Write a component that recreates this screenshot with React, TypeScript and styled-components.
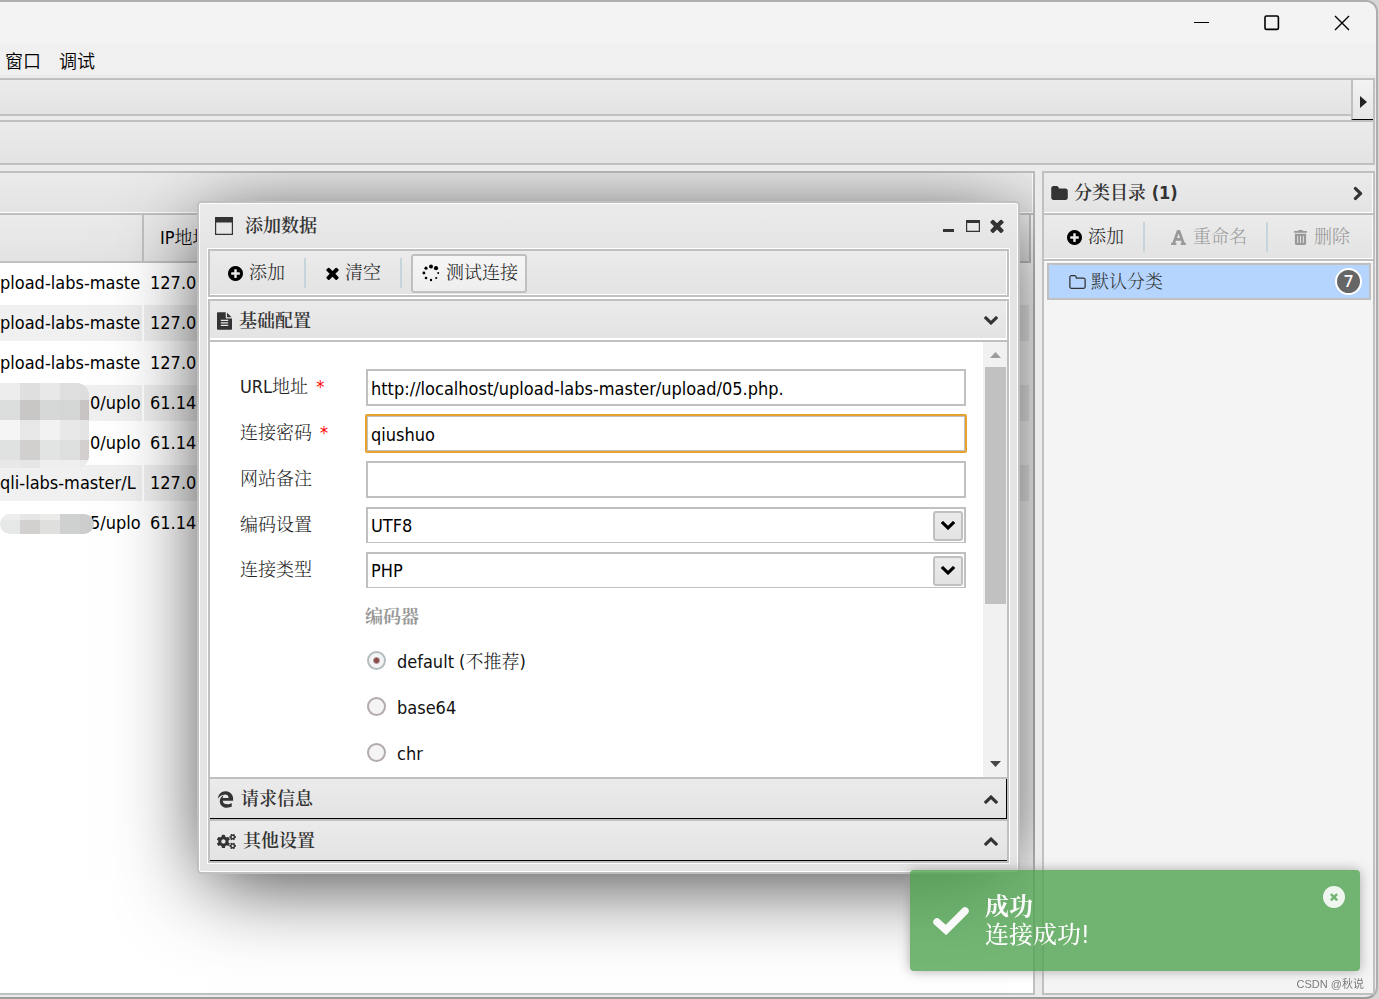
import React, { useState } from 'react';
import styled, { createGlobalStyle, css } from 'styled-components';
import { FaCogs, FaFont, FaTrashAlt } from 'react-icons/fa';
import { FaEdgeLegacy } from 'react-icons/fa6';

const line = '#c0c0c0';
const bar = 'linear-gradient(#ebebeb, #e3e3e3)';
const uiFont = '"DejaVu Sans Condensed", Tahoma, "Noto Serif CJK SC", "Noto Sans CJK SC", sans-serif';

const GlobalStyle = createGlobalStyle`
  * { box-sizing: border-box; }
  body { margin: 0; background: #d6d6d6; font: 300 18px/24px ${uiFont}; color: #000; }
  button, input, select { font: inherit; color: inherit; margin: 0; }
  button { cursor: pointer; }
  h2, h3 { margin: 0; font: inherit; }
`;

/* ---------- icons ---------- */

const paths = {
  chevron:
    'M1683 808l-742 741q-19 19-45 19t-45-19l-742-741q-19-19-19-45.5t19-45.5l166-165q19-19 45-19t45 19l531 531 531-531q19-19 45-19t45 19l166 165q19 19 19 45.5t-19 45.5z',
  times:
    'M1490 1322q0 40-28 68l-136 136q-28 28-68 28t-68-28l-294-294-294 294q-28 28-68 28t-68-28l-136-136q-28-28-28-68t28-68l294-294-294-294q-28-28-28-68t28-68l136-136q28-28 68-28t68 28l294 294 294-294q28-28 68-28t68 28l136 136q28 28 28 68t-28 68l-294 294 294 294q28 28 28 68z',
  plus:
    'M1344 960v-128q0-26-19-45t-45-19h-256v-256q0-26-19-45t-45-19h-128q-26 0-45 19t-19 45v256h-256q-26 0-45 19t-19 45v128q0 26 19 45t45 19h256v256q0 26 19 45t45 19h128q26 0 45-19t19-45v-256h256q26 0 45-19t19-45zm320-64q0 209-103 385.5t-279.5 279.5-385.5 103-385.5-103-279.5-279.5-103-385.5 103-385.5 279.5-279.5 385.5-103 385.5 103 279.5 279.5 103 385.5z',
  folder:
    'M1728 608v704q0 92-66 158t-158 66h-1216q-92 0-158-66t-66-158v-960q0-92 66-158t158-66h320q92 0 158 66t66 158v32h672q92 0 158 66t66 158z',
  folderOpen:
    'M1600 1312v-704q0-40-28-68t-68-28h-704q-40 0-68-28t-28-68v-64q0-40-28-68t-68-28h-320q-40 0-68 28t-28 68v960q0 40 28 68t68 28h1216q40 0 68-28t28-68zm128-704v704q0 92-66 158t-158 66h-1216q-92 0-158-66t-66-158v-960q0-92 66-158t158-66h320q92 0 158 66t66 158v32h672q92 0 158 66t66 158z',
  file:
    'M1596 476q14 14 28 36h-472v-472q22 14 36 28zm-476 164h544v1056q0 40-28 68t-68 28h-1344q-40 0-68-28t-28-68v-1600q0-40 28-68t68-28h800v544q0 40 28 68t68 28zm160 736v-64q0-14-9-23t-23-9h-704q-14 0-23 9t-9 23v64q0 14 9 23t23 9h704q14 0 23-9t9-23zm0-256v-64q0-14-9-23t-23-9h-704q-14 0-23 9t-9 23v64q0 14 9 23t23 9h704q14 0 23-9t9-23zm0-256v-64q0-14-9-23t-23-9h-704q-14 0-23 9t-9 23v64q0 14 9 23t23 9h704q14 0 23-9t9-23z',
};

const Svg = styled.svg<{ $turn?: number }>`
  display: block;
  flex: none;
  fill: currentColor;
  ${(p) => p.$turn && css`transform: rotate(${p.$turn}deg);`}
`;

type IconProps = { name: keyof typeof paths; box: string; w: number; h: number; turn?: number };
const Icon = ({ name, box, w, h, turn }: IconProps) => (
  <Svg viewBox={box} width={w} height={h} $turn={turn} aria-hidden="true">
    <path d={paths[name]} />
  </Svg>
);

const PlusIcon = () => <Icon name="plus" box="128 128 1536 1536" w={15} h={15} />;
const TimesIcon = ({ size = 13 }: { size?: number }) => (
  <Icon name="times" box="302 302 1188 1252" w={size} h={size} />
);
const Chevron = ({ turn = 0 }: { turn?: number }) => (
  <Icon name="chevron" box="90 533 1612 1035" w={14} h={9} turn={turn} />
);

const SpinnerIcon = () => (
  <Svg viewBox="0 0 18 18" width="18" height="18" aria-hidden="true">
    <circle cx="9" cy="2.4" r="2" />
    <circle cx="14" cy="4.2" r="2.1" />
    <circle cx="16.2" cy="9" r="1" />
    <circle cx="14.2" cy="14" r="1.1" />
    <circle cx="9" cy="16" r="1.2" />
    <circle cx="4" cy="14" r="1.3" />
    <circle cx="1.9" cy="9" r="1.4" />
    <circle cx="4" cy="4.2" r="1.6" />
  </Svg>
);

const WindowIcon = () => (
  <Svg viewBox="0 0 18 18" width="18" height="18" aria-hidden="true">
    <path d="M0 0h18v18H0zM1.2 5.6v11.2h15.6v-11.2z" fillRule="evenodd" />
  </Svg>
);

/* ---------- application window ---------- */

const AppWindow = styled.div`
  display: flex;
  flex-direction: column;
  min-height: 100vh;
  margin-right: 1px;
  background: #ebebeb;
  border: 2px solid #aeaeae;
  border-left: 0;
  border-bottom-color: #9c9c9c;
  border-radius: 0 12px 12px 0;
  overflow: hidden;
`;

const TitleBar = styled.header`
  display: flex;
  justify-content: flex-end;
  height: 43px;
  background: #f3f3f3;
`;

const CaptionButton = styled.button`
  display: grid;
  place-items: center;
  width: 70px;
  padding: 0 0 2px 2px;
  border: 0;
  background: none;
  svg { fill: none; stroke: #000; }
`;

const MenuBar = styled.nav`
  display: flex;
  gap: 18px;
  height: 30px;
  padding: 0 5px;
  background: #f0f0f0;
`;

const MenuButton = styled.button`
  padding: 0;
  border: 0;
  background: none;
  font-family: "Noto Sans CJK SC", sans-serif;
  font-weight: 350;
`;

const Workspace = styled.div`
  display: flex;
  flex: 1;
  flex-direction: column;
  padding: 3px 1px 2px 0;
`;

const TabStrip = styled.div`
  display: flex;
  height: 42px;
  border: 2px solid ${line};
  border-width: 2px 2px 0 0;
`;

const Tabs = styled.div`
  flex: 1;
  height: 36px;
  background: ${bar};
  border-bottom: 2px solid ${line};
`;

const TabScroll = styled.button`
  display: grid;
  place-items: center;
  width: 22px;
  height: 40px;
  padding: 4px 0 0;
  color: #222;
  background: linear-gradient(#f3f3f3, #e6e6e6);
  border: 0 solid ${line};
  border-left-width: 2px;
  border-bottom: 1px solid #000;
`;

const MainToolbar = styled.div`
  height: 45px;
  margin-bottom: 6px;
  background: ${bar};
  border: 2px solid ${line};
  border-left: 0;
`;

const Columns = styled.div`
  display: flex;
  flex: 1;
  gap: 7px;
`;

const ListArea = styled.main`
  position: relative;
  flex: 1;
  display: flex;
  min-width: 0;
  overflow: hidden;
`;

const ListPanel = styled.section`
  flex: 1;
  background: #fff;
  border: 2px solid ${line};
  border-left: 0;
`;

const SidePanel = styled.aside`
  width: 333px;
  background: #f4f4f4;
  border: 2px solid ${line};
`;

const PanelHead = styled.div`
  display: flex;
  align-items: center;
  gap: 6px;
  height: 42px;
  padding: 0 8px 0 7px;
  color: #333;
  background: ${bar};
  border-bottom: 2px solid ${line};
  box-shadow: inset -1px -1px #fff;
`;

const PanelTitle = styled.h2`
  flex: 1;
  font-weight: 600;
`;

const IconButton = styled.button`
  display: grid;
  place-items: center;
  min-width: 14px;
  height: 20px;
  padding: 0;
  border: 0;
  background: none;
  color: #333;
`;

const ToolRow = styled.div<{ $roomy?: boolean }>`
  display: flex;
  align-items: center;
  height: ${(p) => (p.$roomy ? 46 : 44)}px;
  padding-left: ${(p) => (p.$roomy ? 12 : 7)}px;
  background: ${bar};
  box-shadow: inset -1px -1px #fff;
  ${(p) => p.$roomy && css`border-bottom: 2px solid ${line};`}
`;

const ToolButton = styled.button<{ $raised?: boolean }>`
  display: flex;
  align-items: center;
  gap: 6px;
  height: 39px;
  padding: 0 7px 0 9px;
  color: #222;
  background: ${(p) => (p.$raised ? 'linear-gradient(#f6f6f6, #eeeeee)' : 'none')};
  border: 2px solid ${(p) => (p.$raised ? line : 'transparent')};
  border-radius: 3px;
  svg { color: #000; }
  &:disabled { color: #999; svg { color: #999; } }
`;

const Separator = styled.span<{ $roomy?: boolean }>`
  width: 2px;
  height: 30px;
  margin: 0 ${(p) => (p.$roomy ? 14 : 9)}px 0 10px;
  background: #c5d5db;
`;

const CategoryList = styled.ul`
  margin: 0;
  padding: 1px 2px 2px 3px;
  list-style: none;
  border-top: 1px solid #fff;
`;

const Category = styled.li`
  display: flex;
  align-items: center;
  gap: 5px;
  height: 37px;
  padding: 0 7px 0 20px;
  color: #333;
  background: #b5d5ff;
  border: 2px solid ${line};
`;

const CategoryName = styled.span`
  flex: 1;
`;

const Badge = styled.span`
  width: 27px;
  height: 27px;
  border: 2px solid #fff;
  border-radius: 50%;
  background: #666;
  color: #fff;
  font: 600 16px/22px "Open Sans", sans-serif;
  text-align: center;
`;

/* ---------- shell list ---------- */

const ListTable = styled.table`
  width: calc(100% - 2px);
  table-layout: fixed;
  border-spacing: 0;
`;

const HeadCell = styled.th<{ $first?: boolean }>`
  height: 48px;
  width: ${(p) => (p.$first ? '144px' : 'auto')};
  padding: 0 16px;
  font-weight: 300;
  text-align: left;
  background: ${bar};
  border: 0 solid ${line};
  border-width: 0 2px 2px 0;
`;

const Cell = styled.td<{ $shade?: boolean; $indent?: number }>`
  height: 40px;
  padding: 0 0 0 ${(p) => p.$indent ?? 0}px;
  overflow: hidden;
  white-space: nowrap;
  background: ${(p) => (p.$shade ? '#f0f0f0' : '#fff')};
  border: 2px solid #fff;
  border-left: 0;
`;

const Redaction = styled.svg<{ $top: number }>`
  position: absolute;
  left: 0;
  top: ${(p) => p.$top}px;
`;

/* ---------- dialog ---------- */

const Dialog = styled.section`
  position: absolute;
  left: 197px;
  top: 30px;
  width: 823px;
  padding: 0 9px 9px;
  background: linear-gradient(#ebebeb, #e4e4e4 46px);
  border: 2px solid ${line};
  border-radius: 4px;
  box-shadow: inset 0 0 0 1px #fff, 0 15px 80px -10px rgba(0, 0, 0, 0.8);
`;

const DialogHead = styled.div`
  display: flex;
  align-items: center;
  gap: 12px;
  height: 46px;
  padding: 0 5px 0 7px;
  color: #333;
`;

const DialogTitle = styled.h2`
  flex: 1;
  font-weight: 600;
`;

const DialogActions = styled.div`
  display: flex;
  gap: 10px;
`;

const DialogBody = styled.div`
  display: grid;
  gap: 2px;
  background: #fff;
  box-shadow: 0 0 0 1px #fff;
`;

const Boxed = styled.div`
  border: 2px solid ${line};
`;

const SectionHead = styled.button<{ $open?: boolean; $edge?: boolean }>`
  display: flex;
  align-items: center;
  gap: 7px;
  width: 100%;
  padding: 0 9px 0 7px;
  text-align: left;
  font-weight: 600;
  color: #333;
  background: ${bar};
  border: 0 solid ${line};
  ${(p) =>
    p.$open
      ? css`
          height: 41px;
          border-bottom-width: 2px;
          box-shadow: inset -1px -2px #fff;
        `
      : css`
          height: 42px;
          border-top-width: 2px;
          box-shadow: inset ${p.$edge ? -1 : 0}px -1px #000;
        `}
`;

const SectionLabel = styled.span`
  flex: 1;
`;

const SectionBody = styled.div`
  display: flex;
  height: 435px;
  overflow: hidden;
  background: #fff;
`;

const Form = styled.form`
  flex: 1;
  padding: 27px 17px 0 30px;
`;

const Field = styled.div`
  display: grid;
  grid-template-columns: 126px 1fr;
  margin-bottom: 9px;
`;

const FieldLabel = styled.label`
  line-height: 36px;
  color: #222;
`;

const Required = styled.span`
  margin-left: 8px;
  color: #f00;
`;

const TextInput = styled.input`
  width: 100%;
  height: 37px;
  padding: 2px 3px 0;
  background: #fff;
  border: 2px solid ${line};
  outline: 0;
  &[data-active='true'] {
    padding: 3px 4px 1px;
    border: 1px solid #e5a22f;
    border-radius: 1px;
    box-shadow: 0 0 0 1px #e5a22f, inset 0 0 0 1px ${line};
  }
`;

const Combo = styled.div`
  display: grid;
  align-items: center;
  height: 36px;
  border: 2px solid ${line};
  border-bottom-width: 1px;
`;

const Select = styled.select`
  grid-area: 1 / 1;
  width: 100%;
  height: 33px;
  padding: 0 3px;
  appearance: none;
  border: 0;
  outline: 0;
  background: none;
`;

const ComboArrow = styled.span`
  grid-area: 1 / 1;
  justify-self: end;
  display: grid;
  place-items: center;
  width: 30px;
  height: 30px;
  margin-right: 1px;
  background: ${bar};
  border: 2px solid ${line};
  border-radius: 3px;
  pointer-events: none;
`;

const Encoders = styled.fieldset`
  margin: 8px 0 0 125px;
  padding: 0;
  border: 0;
`;

const EncodersTitle = styled.legend`
  height: 42px;
  padding: 8px 0 0;
  font-weight: 700;
  color: #999;
`;

const RadioRow = styled.label`
  display: flex;
  align-items: center;
  gap: 11px;
  height: 46px;
  padding-left: 2px;
  color: #111;
`;

const Radio = styled.input`
  appearance: none;
  width: 19px;
  height: 19px;
  && { margin: 0 0 3px; }
  border: 2px solid #b3abab;
  border-radius: 50%;
  background: #f4f4f4;
  &:checked {
    border-color: #b4bcc0;
    background: radial-gradient(circle, #8a4a4a 2px, #b89a9a 3px, #f4f4f4 4px);
  }
`;

const Scrollbar = styled.div`
  display: flex;
  flex-direction: column;
  align-items: center;
  width: 24px;
  padding: 10px 1px 10px 2px;
  background: #f1f1f1;
`;

const Thumb = styled.div`
  width: 21px;
  height: 237px;
  margin: 9px 0 auto;
  background: #c1c1c1;
`;

/* ---------- toast and watermark ---------- */

const Toast = styled.div`
  position: fixed;
  right: 19px;
  bottom: 28px;
  display: flex;
  align-items: center;
  gap: 16px;
  width: 450px;
  height: 101px;
  padding: 0 15px 0 23px;
  color: #fff;
  font-size: 24px;
  line-height: 28px;
  background: #51a351;
  border-radius: 4px;
  box-shadow: 0 0 12px #999;
  opacity: 0.8;
`;

const ToastText = styled.div`
  flex: 1;
  font-weight: 500;
`;

const ToastTitle = styled.div`
  font-weight: 700;
`;

const ToastClose = styled.button`
  display: grid;
  place-items: center;
  align-self: flex-start;
  width: 22px;
  height: 22px;
  margin-top: 16px;
  padding: 0;
  border: 0;
  border-radius: 50%;
  color: #51a351;
  background: rgba(255, 255, 255, 0.9);
`;

const Watermark = styled.div`
  position: fixed;
  right: 15px;
  bottom: 6px;
  font: 11px/18px "Liberation Sans", "Noto Sans CJK SC", sans-serif;
  color: #777;
  text-shadow: 0 0 1px #fff;
`;

const shells = [
  { url: 'pload-labs-maste', ip: '127.0.0.1', indent: 0 },
  { url: 'pload-labs-maste', ip: '127.0.0.1', indent: 0 },
  { url: 'pload-labs-maste', ip: '127.0.0.1', indent: 0 },
  { url: '0/uplo', ip: '61.147.0.0', indent: 90 },
  { url: '0/uplo', ip: '61.147.0.0', indent: 90 },
  { url: 'qli-labs-master/L', ip: '127.0.0.1', indent: 0 },
  { url: '5/uplo', ip: '61.147.0.0', indent: 90 },
];

const mosaic = [
  ['#ededed', '#dfdfdf', '#e8e8e8', '#dedede', '#dedede', 0, 17],
  ['#dcdedd', '#c8c7c5', '#d5d8d7', '#d4d6d5', '#c7c4c3', 17, 20],
  ['#f5f5f5', '#e7e7e8', '#f2f2f2', '#e8e8e9', '#e4e4e4', 37, 20],
  ['#dfe2e1', '#d2d0cf', '#e1e4e3', '#dcdfde', '#d3cfce', 57, 20],
  ['#e8e8e8', '#e6e6e6', '#efefef', '#eeeeee', '#ececec', 77, 8],
] as const;

const encoders = ['default (不推荐)', 'base64', 'chr'];

export default function App() {
  const [url, setUrl] = useState('http://localhost/upload-labs-master/upload/05.php.');
  const [pwd, setPwd] = useState('qiushuo');
  const [encoder, setEncoder] = useState(encoders[0]);

  return (
    <>
      <GlobalStyle />
      <AppWindow>
        <TitleBar>
          <CaptionButton aria-label="最小化">
            <Svg viewBox="0 0 16 16" width="16" height="16"><path d="M0 7.5h15" /></Svg>
          </CaptionButton>
          <CaptionButton aria-label="最大化">
            <Svg viewBox="0 0 16 16" width="16" height="16" strokeWidth="1.6">
              <rect x="1" y="1" width="13.4" height="13.4" rx="1.5" />
            </Svg>
          </CaptionButton>
          <CaptionButton aria-label="关闭">
            <Svg viewBox="0 0 16 16" width="16" height="16" strokeWidth="1.4"><path d="M1 1l14 14M15 1L1 15" /></Svg>
          </CaptionButton>
        </TitleBar>
        <MenuBar>
          <MenuButton>窗口</MenuButton>
          <MenuButton>调试</MenuButton>
        </MenuBar>

        <Workspace>
          <TabStrip>
            <Tabs />
            <TabScroll aria-label="向右滚动">
              <Svg viewBox="0 0 7 12" width="7" height="12"><path d="M0 0l7 6-7 6z" /></Svg>
            </TabScroll>
          </TabStrip>
          <MainToolbar />

          <Columns>
            <ListArea>
              <ListPanel>
                <PanelHead />
                <ListTable>
                  <thead>
                    <tr>
                      <HeadCell $first />
                      <HeadCell>IP地址</HeadCell>
                    </tr>
                  </thead>
                  <tbody>
                    {shells.map((s, i) => (
                      <tr key={i}>
                        <Cell $shade={i % 2 === 1} $indent={s.indent}>{s.url}</Cell>
                        <Cell $shade={i % 2 === 1} $indent={6}>{s.ip}</Cell>
                      </tr>
                    ))}
                  </tbody>
                </ListTable>
              </ListPanel>
              <Redaction $top={212} width="89" height="85" aria-hidden="true">
                <clipPath id="blockA"><rect x="-20" width="109" height="85" rx="12" /></clipPath>
                <g clipPath="url(#blockA)">
                  {mosaic.map((row) =>
                    [0, 1, 2, 3, 4].map((c) => (
                      <rect key={c + '-' + row[5]} x={c * 20} y={row[5]} width="20" height={row[6]} fill={row[c] as string} />
                    )),
                  )}
                </g>
              </Redaction>
              <Redaction $top={343} width="94" height="20" aria-hidden="true">
                <clipPath id="blockB"><rect width="94" height="20" rx="10" /></clipPath>
                <g clipPath="url(#blockB)">
                  {['#e6e8e8', '#d2d1d0', '#dfdfdd', '#cfd1d1', '#cdcdcd'].map((c, i) => (
                    <rect key={i} x={i * 20} width="20" height="20" fill={c} />
                  ))}
                  <rect width="60" height="6" fill="#f0f0f0" opacity=".7" />
                </g>
              </Redaction>

              <Dialog role="dialog" aria-labelledby="dialog-title">
                <DialogHead>
                  <WindowIcon />
                  <DialogTitle id="dialog-title">添加数据</DialogTitle>
                  <DialogActions>
                    <IconButton aria-label="最小化">
                      <Svg viewBox="0 0 14 14" width="14" height="14"><path d="M1 10h11v3H1z" /></Svg>
                    </IconButton>
                    <IconButton aria-label="最大化">
                      <Svg viewBox="0 0 14 14" width="14" height="14">
                        <path d="M0 1h14v12H0zM1.2 4v7.8h11.6V4z" fillRule="evenodd" />
                      </Svg>
                    </IconButton>
                    <IconButton aria-label="关闭"><TimesIcon size={14} /></IconButton>
                  </DialogActions>
                </DialogHead>
                <DialogBody>
                  <Boxed>
                    <ToolRow>
                      <ToolButton><PlusIcon />添加</ToolButton>
                      <Separator />
                      <ToolButton><TimesIcon />清空</ToolButton>
                      <Separator />
                      <ToolButton $raised><SpinnerIcon />测试连接</ToolButton>
                    </ToolRow>
                  </Boxed>
                  <Boxed>
                    <SectionHead $open aria-expanded="true">
                      <Icon name="file" box="128 0 1536 1792" w={15} h={18} />
                      <SectionLabel>基础配置</SectionLabel>
                      <Chevron />
                    </SectionHead>
                    <SectionBody>
                      <Form>
                        <Field>
                          <FieldLabel htmlFor="url">URL地址<Required>*</Required></FieldLabel>
                          <TextInput id="url" value={url} onChange={(e) => setUrl(e.target.value)} />
                        </Field>
                        <Field>
                          <FieldLabel htmlFor="pwd">连接密码<Required>*</Required></FieldLabel>
                          <TextInput id="pwd" data-active="true" value={pwd} onChange={(e) => setPwd(e.target.value)} />
                        </Field>
                        <Field>
                          <FieldLabel htmlFor="note">网站备注</FieldLabel>
                          <TextInput id="note" />
                        </Field>
                        <Field>
                          <FieldLabel htmlFor="charset">编码设置</FieldLabel>
                          <Combo>
                            <Select id="charset"><option>UTF8</option></Select>
                            <ComboArrow><Chevron /></ComboArrow>
                          </Combo>
                        </Field>
                        <Field>
                          <FieldLabel htmlFor="type">连接类型</FieldLabel>
                          <Combo>
                            <Select id="type"><option>PHP</option></Select>
                            <ComboArrow><Chevron /></ComboArrow>
                          </Combo>
                        </Field>
                        <Encoders>
                          <EncodersTitle>编码器</EncodersTitle>
                          {encoders.map((name) => (
                            <RadioRow key={name}>
                              <Radio type="radio" name="encoder" checked={encoder === name} onChange={() => setEncoder(name)} />
                              {name}
                            </RadioRow>
                          ))}
                        </Encoders>
                      </Form>
                      <Scrollbar aria-hidden="true">
                        <Svg viewBox="0 0 11 6" width="11" height="6" opacity=".35"><path d="M0 6l5.5-6L11 6z" /></Svg>
                        <Thumb />
                        <Svg viewBox="0 0 11 6" width="11" height="6" opacity=".7"><path d="M0 0l5.5 6L11 0z" /></Svg>
                      </Scrollbar>
                    </SectionBody>
                    <SectionHead $edge aria-expanded="false">
                      <FaEdgeLegacy size={17} />
                      <SectionLabel>请求信息</SectionLabel>
                      <Chevron turn={180} />
                    </SectionHead>
                    <SectionHead aria-expanded="false">
                      <FaCogs size={19} />
                      <SectionLabel>其他设置</SectionLabel>
                      <Chevron turn={180} />
                    </SectionHead>
                  </Boxed>
                </DialogBody>
              </Dialog>
            </ListArea>

            <SidePanel>
              <PanelHead>
                <Icon name="folder" box="64 128 1664 1408" w={17} h={14} />
                <PanelTitle>分类目录 (1)</PanelTitle>
                <IconButton aria-label="折叠"><Chevron turn={-90} /></IconButton>
              </PanelHead>
              <ToolRow $roomy>
                <ToolButton><PlusIcon />添加</ToolButton>
                <Separator $roomy />
                <ToolButton disabled><FaFont size={17} />重命名</ToolButton>
                <Separator $roomy />
                <ToolButton disabled><FaTrashAlt size={15} />删除</ToolButton>
              </ToolRow>
              <CategoryList>
                <Category>
                  <Icon name="folderOpen" box="64 128 1664 1408" w={17} h={14} />
                  <CategoryName>默认分类</CategoryName>
                  <Badge>7</Badge>
                </Category>
              </CategoryList>
            </SidePanel>
          </Columns>
        </Workspace>
      </AppWindow>

      <Toast role="status">
        <Svg viewBox="0 0 36 28" width="36" height="28" aria-hidden="true">
          <path d="M4 15l9 8L32 4" fill="none" stroke="#fff" strokeWidth="7.5" strokeLinecap="round" />
        </Svg>
        <ToastText>
          <ToastTitle>成功</ToastTitle>
          连接成功!
        </ToastText>
        <ToastClose aria-label="关闭"><TimesIcon size={8} /></ToastClose>
      </Toast>
      <Watermark>CSDN @秋说</Watermark>
    </>
  );
}
